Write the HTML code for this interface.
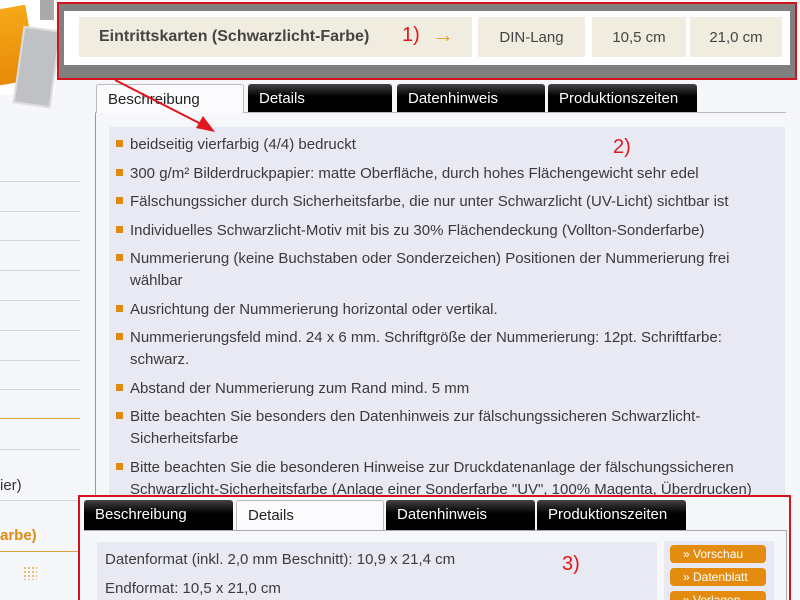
<!DOCTYPE html>
<html style="width:800px;height:600px;overflow:hidden"><head><meta charset="utf-8"><style>
*{margin:0;padding:0;box-sizing:border-box}
body{width:800px;height:600px;overflow:hidden;background:#f6f7fb;font-family:"Liberation Sans",sans-serif;position:relative;color:#3c3c3c}
.a{position:absolute}
.hl{position:absolute;left:0;width:80px;height:1px;background:#d4d6dc}
.cell{position:absolute;top:17px;height:40px;background:#f1ece0;font-size:15px;color:#444;display:flex;align-items:center;justify-content:center}
.tab{position:absolute;height:28px;font-size:15px;padding:6px 0 0 11px;color:#fff;background:linear-gradient(#444,#000 45%,#000);border-radius:3px 3px 0 0}
.tab.on{background:#fbfbfd;color:#222;border:1px solid #bbb;border-bottom:none}
ul{list-style:none}
li{position:relative;padding-left:19px;font-size:15px;line-height:22px;margin-bottom:6.5px;color:#3a3a3a}
li:before{content:"";position:absolute;left:5px;top:6px;width:7px;height:7px;background:#e08a12}
.btn{position:absolute;left:670px;width:96px;height:18px;background:#e38c10;border-radius:4px;color:#fff;font-size:12px;padding:2px 0 0 13px}
</style></head><body>
<div class="a" style="left:0;top:0;width:55px;height:95px;background:#fff"></div>
<div class="a" style="left:-12px;top:8px;width:44px;height:75px;background:linear-gradient(#f5a818,#e88a08);transform:rotate(-10deg)"></div>
<div class="a" style="left:18px;top:28px;width:38px;height:78px;background:#bfc1c4;border:2px solid #ddd;transform:rotate(8deg)"></div>
<div class="a" style="left:40px;top:0;width:14px;height:20px;background:#aaa"></div>
<div class="hl" style="top:181px"></div><div class="hl" style="top:211px"></div><div class="hl" style="top:240px"></div><div class="hl" style="top:270px"></div><div class="hl" style="top:300px"></div><div class="hl" style="top:330px"></div><div class="hl" style="top:360px"></div><div class="hl" style="top:389px"></div>
<div class="hl" style="top:418px;background:#e0a040"></div><div class="hl" style="top:449px"></div>
<div class="a" style="left:0;top:477px;font-size:15px;color:#333">ier)</div>
<div class="hl" style="top:500px"></div>
<div class="a" style="left:0;top:527px;font-size:15px;color:#e08a10;font-weight:bold">arbe)</div>
<div class="hl" style="top:551px;background:#e0a040"></div>
<div class="a" style="left:23px;top:566px;width:14px;height:14px;background:radial-gradient(#e9b060 35%,transparent 40%) 0 0/4px 4px"></div>
<div class="a" style="left:95px;top:112px;width:1px;height:400px;background:#999"></div>
<div class="a" style="left:95px;top:112px;width:691px;height:1px;background:#bbb"></div>
<div class="a" style="left:57px;top:2px;width:740px;height:78px;border:2px solid #d0161c;background:#808080"></div>
<div class="a" style="left:64px;top:11px;width:726px;height:54px;background:#fff"></div>
<div class="cell" style="left:79px;width:393px;justify-content:flex-start;padding-left:20px;font-weight:bold;font-size:16px;color:#444">Eintrittskarten (Schwarzlicht-Farbe)</div>
<div class="a" style="left:402px;top:24px;font-size:20px;color:#e0171c">1)</div>
<div class="a" style="left:432px;top:22px;font-size:22px;color:#e0a020;font-weight:bold">→</div>
<div class="cell" style="left:478px;width:107px">DIN-Lang</div>
<div class="cell" style="left:592px;width:94px">10,5 cm</div>
<div class="cell" style="left:690px;width:92px">21,0 cm</div>
<div class="tab on" style="left:96px;top:84px;width:148px;height:29px">Beschreibung</div>
<div class="tab" style="left:248px;top:84px;width:144px">Details</div>
<div class="tab" style="left:397px;top:84px;width:148px">Datenhinweis</div>
<div class="tab" style="left:548px;top:84px;width:149px">Produktionszeiten</div>
<div class="a" style="left:109px;top:127px;width:676px;height:380px;background:#e8e9f2"></div>
<div class="a" style="left:613px;top:136px;font-size:20px;color:#e0171c">2)</div>
<ul class="a" style="left:111px;top:134px;width:670px">
<li>beidseitig vierfarbig (4/4) bedruckt</li>
<li>300 g/m² Bilderdruckpapier: matte Oberfläche, durch hohes Flächengewicht sehr edel</li>
<li>Fälschungssicher durch Sicherheitsfarbe, die nur unter Schwarzlicht (UV-Licht) sichtbar ist</li>
<li>Individuelles Schwarzlicht-Motiv mit bis zu 30% Flächendeckung (Vollton-Sonderfarbe)</li>
<li>Nummerierung (keine Buchstaben oder Sonderzeichen) Positionen der Nummerierung frei wählbar</li>
<li>Ausrichtung der Nummerierung horizontal oder vertikal.</li>
<li>Nummerierungsfeld mind. 24 x 6 mm. Schriftgröße der Nummerierung: 12pt. Schriftfarbe: schwarz.</li>
<li>Abstand der Nummerierung zum Rand mind. 5 mm</li>
<li>Bitte beachten Sie besonders den Datenhinweis zur fälschungssicheren Schwarzlicht-Sicherheitsfarbe</li>
<li>Bitte beachten Sie die besonderen Hinweise zur Druckdatenanlage der fälschungssicheren Schwarzlicht-Sicherheitsfarbe (Anlage einer Sonderfarbe "UV", 100% Magenta, Überdrucken)</li>
</ul>
<svg class="a" style="left:0;top:0" width="800" height="600"><line x1="115" y1="80" x2="205" y2="126" stroke="#e0171c" stroke-width="2"/><polygon points="215,132 196,128 203,116" fill="#e0171c"/></svg>
<div class="a" style="left:78px;top:495px;width:713px;height:105px;border:2px solid #d0161c;border-bottom:none;background:#f6f7fb;overflow:hidden"></div>
<div class="tab" style="left:84px;top:500px;width:149px;height:30px">Beschreibung</div>
<div class="tab on" style="left:236px;top:500px;width:148px;height:31px">Details</div>
<div class="tab" style="left:386px;top:500px;width:149px;height:30px">Datenhinweis</div>
<div class="tab" style="left:537px;top:500px;width:149px;height:30px">Produktionszeiten</div>
<div class="a" style="left:84px;top:530px;width:703px;height:1px;background:#aaa"></div>
<div class="a" style="left:786px;top:530px;width:1px;height:70px;background:#aaa"></div>
<div class="a" style="left:97px;top:542px;width:560px;height:58px;background:#e8e9f2"></div>
<div class="a" style="left:664px;top:541px;width:110px;height:59px;background:#e8e9f2"></div>
<div class="a" style="left:105px;top:551px;font-size:15px">Datenformat (inkl. 2,0 mm Beschnitt): 10,9 x 21,4 cm</div>
<div class="a" style="left:105px;top:580px;font-size:15px">Endformat: 10,5 x 21,0 cm</div>
<div class="a" style="left:562px;top:553px;font-size:20px;color:#e0171c">3)</div>
<div class="btn" style="top:545px">» Vorschau</div>
<div class="btn" style="top:568px">» Datenblatt</div>
<div class="btn" style="top:591px;height:9px;border-radius:4px 4px 0 0;overflow:hidden">» Vorlagen</div>
</body></html>
